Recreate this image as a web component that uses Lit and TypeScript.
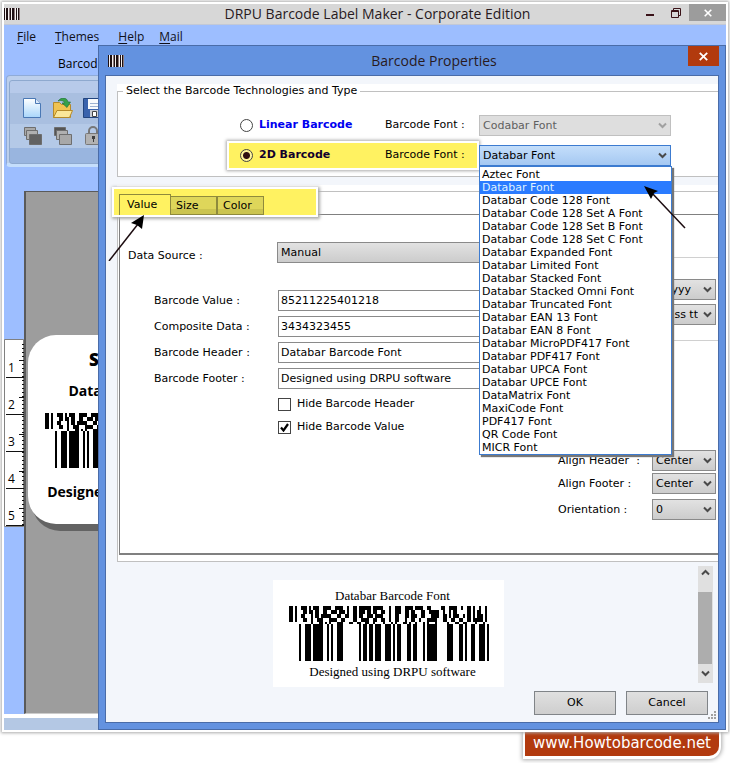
import { LitElement, html, svg, css, nothing } from "lit";
import { customElement, property, state } from "lit/decorators.js";
import { classMap } from "lit/directives/class-map.js";

const FONTS = [
  "Aztec Font", "Databar Font", "Databar Code 128 Font", "Databar Code 128 Set A Font",
  "Databar Code 128 Set B Font", "Databar Code 128 Set C Font", "Databar Expanded Font",
  "Databar Limited Font", "Databar Stacked Font", "Databar Stacked Omni Font",
  "Databar Truncated Font", "Databar EAN 13 Font", "Databar EAN 8 Font",
  "Databar MicroPDF417 Font", "Databar PDF417 Font", "Databar UPCA Font",
  "Databar UPCE Font", "DataMatrix Font", "MaxiCode Font", "PDF417 Font",
  "QR Code Font", "MICR Font",
];

/** Composite part of the symbol: four rows of modules, then a separator row. */
const COMPOSITE = [
  "110100111010111001111001111001001101111110111110001001110011110111100110000011001111001001101001001",
  "110100011011011001100111011101001101110110110011001001110011011000110011111001001011000001101011001",
  "110100110001011011111000110011001101100111011110001001100011011100110001111001101011100101101011101",
  "110100011001001110001111001100001100111100110011001001100010011001000111110001100110011001101111101",
];
const SEPARATOR =
  "0000000000010001101010001110001100110011001000010001010001101001000101000100000100011001100001000100";

/** Linear part: [first module, width]. */
const BARS = [
  [5, 1], [8, 3], [12, 5], [19, 1], [21, 1], [24, 3], [35, 1], [37, 2], [40, 2], [43, 3],
  [48, 3], [52, 1], [54, 2], [59, 2], [62, 2], [67, 1], [69, 5], [79, 3], [85, 2], [88, 1],
  [91, 2], [95, 3], [99, 1],
];

const runs = (row: string, y: number, h: number) =>
  [...row.matchAll(/1+/g)].map((m) => `M${m.index! * 2} ${y}h${m[0].length * 2}v${h}h-${m[0].length * 2}z`).join("");

@customElement("composite-barcode")
class CompositeBarcode extends LitElement {
  static styles = css`
    :host { display: block; width: 200px; height: 55px; }
    svg { display: block; }
  `;
  render() {
    const d =
      COMPOSITE.map((r, i) => runs(r, i * 4, 4)).join("") +
      runs(SEPARATOR, 16, 2) +
      BARS.map(([x, w]) => `M${x * 2} 18h${w * 2}v37h-${w * 2}z`).join("");
    return html`<svg width="200" height="55" shape-rendering="crispEdges" role="img" aria-label="Barcode"><path d=${d} /></svg>`;
  }
}

@customElement("drop-down")
class DropDown extends LitElement {
  @property() label = "";
  @property({ type: Array }) options: string[] = [];
  @property({ type: Number }) selected = 0;
  @property({ type: Boolean }) disabled = false;
  @property({ type: Boolean }) active = false;
  @property({ type: Boolean }) end = false;

  static styles = css`
    :host { display: grid; height: 21px; }
    select, svg { grid-area: 1 / 1; }
    select {
      appearance: none; width: 100%; height: 21px; margin: 0; padding: 0 17px 0 3px;
      border: 1px solid #8a8a8a; border-radius: 0; outline: none;
      background: linear-gradient(#e2e2e2, #cccccc);
      font: 11px "DejaVu Sans", sans-serif; color: #000;
    }
    select.active { border-color: #3c7bd0; background: linear-gradient(#c4defa, #a5c8f2); }
    select.end { text-align-last: right; }
    select:disabled { border-color: #c0c0c0; background: #dedede; color: #606060; opacity: 1; }
    svg { justify-self: end; align-self: center; margin-right: 4px; pointer-events: none; }
    path { fill: none; stroke: #4a4a4a; stroke-width: 2; }
    path.off { stroke: #a0a0a0; }
  `;
  render() {
    return html`
      <select aria-label=${this.label} ?disabled=${this.disabled}
        class=${classMap({ active: this.active, end: this.end })}>
        ${this.options.map((o, i) => html`<option ?selected=${i === this.selected}>${o}</option>`)}
      </select>
      <svg width="9" height="7"><path class=${this.disabled ? "off" : ""} d="M1 1.5 4.5 5 8 1.5" /></svg>
    `;
  }
}

const stripes = html`<svg class="app-icon" width="16" height="12" shape-rendering="crispEdges" aria-hidden="true">
  <path fill="#f4f0f0" d="M0 0h16v12H0z" />
  <path fill="#1d0f12" d="M0 0h1v12H0zM2 0h2v12H2zM6 0h1v12H6zM8 0h2v12H8zM12 0h1v12h-1zM14 0h1v12h-1z" />
  <path fill="#8b7a7c" d="M5 0h1v12H5zM10 0h1v12h-1zM15 0h1v12h-1z" /></svg>`;

const stack = (front: boolean) => svg`
  <g stroke="#6e6e6e">
    <path fill=${front ? "#a9a9a9" : "#555"} d="M1.500 1.500h11v8h-11z" />
    <path fill="#b0b0b0" d="M3.500 4.500h11v9h-11z" />
    <path fill=${front ? "#626262" : "#a8a8a8"} d="M6.500 8.500h12v10h-12z" />
  </g>`;

const TOOLS = [
  { name: "New", art: svg`<defs><linearGradient id="np" x2="0" y2="1"><stop stop-color="#fff"/><stop offset="1" stop-color="#a9d6fb"/></linearGradient></defs>
      <path fill="url(#np)" stroke="#4a78b5" d="M.5.500h12l5 5v14H.500z"/><path fill="#dceafa" stroke="#4a78b5" d="M12.500.5v5h5"/>` },
  { name: "Open", art: svg`<path fill="#f0c352" stroke="#b58a2a" d="M.500 19.500v-15h6l2 2h9v13z"/><path fill="#fbe79a" stroke="#b58a2a" d="M.500 19.500 4 12.500h15.500l-3 7z"/>
      <path fill="#35a04a" stroke="#1c6c33" stroke-width=".6" d="M5 3C8-1 14-1 15 4h2.500L14 9.500l-5-4.500h2.500C11 2.500 8 2 5 3z"/>` },
  { name: "Save", art: svg`<path fill="#3a63ad" stroke="#22457f" d="M.5.500h19v19H.500z"/><path fill="#f8fafc" d="M5 1h14v10H5z"/><path stroke="#9db2d2" d="M7 5.500h10M7 8.500h10"/><path fill="#c8ccd4" d="M7 12h10v7H7z"/><path fill="#fff" stroke="#444" d="M9.500 13.500h4v5h-4z"/>` },
  { name: "Send to back", art: stack(true) },
  { name: "Bring to front", art: stack(false) },
  { name: "Lock", art: svg`<path fill="none" stroke="#777" stroke-width="2" d="M6 8V5a4 4 0 0 1 8 0v3"/><rect x="2.500" y="7.500" width="17" height="11" rx="1" fill="#b2b2b2" stroke="#787878"/><path fill="#3f3f3f" d="M9 10h3v3h-1v3h-1v-3H9z"/>` },
];

@customElement("app-root")
class AppRoot extends LitElement {
  @state() private highlighted = 1;

  static styles = css`
    :host {
      display: flex; flex-direction: column; box-sizing: border-box; min-height: 100vh;
      padding: 2px 2px 0; background: #fff; overflow: hidden;
      font: 11px/14px "DejaVu Sans", sans-serif; color: #000;
    }
    * { box-sizing: border-box; }
    button { margin: 0; padding: 0; font: inherit; color: inherit; }
    ul { margin: 0; padding: 0; list-style: none; }
    svg { display: block; flex: none; }
    .title { font: 14px/20px "Open Sans", sans-serif; color: #281a1e; margin: 0; text-align: center; flex: 1; white-space: nowrap; }

    /* main window */
    .window {
      position: relative; flex: 1; display: flex; flex-direction: column;
      border: 2px solid #fff; box-shadow: 0 0 3px 1px #aaa; background: #9dbeff;
    }
    .bar { display: flex; height: 21px; background: #d7d7d7; border-bottom: 1px solid #c2c8d6; }
    .bar .app-icon { margin-top: 4px; }
    .bar .title { padding-left: 98px; }
    .controls { display: flex; }
    .controls button { display: grid; place-items: center; width: 26px; height: 17px; border: 0; background: none; }
    .controls .close { width: 37px; background: #9c9c9c; }
    .menu { display: flex; gap: 19px; padding: 2px 13px; height: 28px; font: 12px/20px "Open Sans", sans-serif; }
    .menu a { color: #101018; text-decoration: none; }
    .menu a:last-child { margin-left: -4px; }
    .menu u { text-underline-offset: 2px; }
    .ribbon-tab { padding-left: 54px; font: 12px/22px "Open Sans", sans-serif; height: 22px; }
    .ribbon {
      margin: 0 2px; height: 92px; padding: 4px 2px; border: 1px solid #8fabd8; border-radius: 4px 0 0 4px;
      border-bottom: 4px solid #c5defc; background: #bccfec; 
    }
    .tools {
      height: 84px; padding: 17px 0 0 13px; border: 1px solid #8ea9cf; border-radius: 3px;
      display: grid; grid-template-columns: repeat(3, 20px); grid-auto-rows: 20px; gap: 8px 10px;
      background: linear-gradient(#b7caea 12px, #a9bfe0 12px, #a9bfe0 43px, #b4c9e7 43px, #b4c9e7 67px, #99b5df 67px);
    }
    .tools button { border: 0; background: none; }
    .desk { flex: 1; display: flex; margin-top: 24px; border-bottom: 4px solid #fff; }
    .ruler { width: 20px; padding-top: 148px; }
    .ruler text { font: 12px "Open Sans", sans-serif; }
    .canvas { flex: 1; padding: 143px 2px; background: #9d9d9d; border: 1px solid #5a5a5a; border-left-width: 2px; border-bottom-color: #ccc; }
    .label {
      width: 234px; height: 189px; padding: 13px 0 0; border-radius: 28px; background: #fff; box-shadow: 4px 7px #636363;
      display: flex; flex-direction: column; align-items: center; font: bold 14px/22px "Open Sans", sans-serif; white-space: nowrap;
    }
    .label b { font-size: 17px; line-height: 24px; padding-left: 4px; }
    .label p { margin: 8px 0 11px; }
    .label p:last-child { margin: 13px 0 0; padding-left: 18px; }
    .status { height: 12px; background: #b4c8e4; }

    /* dialog */
    .dialog {
      position: absolute; left: 94px; right: 0; top: 41px; bottom: 0; display: flex; flex-direction: column;
      padding: 0 6px 6px; border: 1px solid #4a6ca8; background: #6392e0;
    }
    .dialog header { display: flex; height: 29px; }
    .dialog header .app-icon { margin: 9px 0 0 3px; }
    .dialog header .title { line-height: 30px; padding-left: 56px; }
    .dialog .close { display: grid; place-items: center; width: 31px; height: 20px; border: 0; background: #b23a0e; }
    .body { flex: 1; display: flex; flex-direction: column; padding: 8px 0 0 11px; border: 1px solid #4a6ca8; background: #f3f6fb; min-width: 0; }

    .group { background: #fff; margin-bottom: 8px; }
    fieldset { min-width: 0; margin: 0; padding: 12px 0 6px 109px; border: solid #c0c0c0; border-width: 1px 0 1px 1px; }
    legend { margin-left: -104px; padding: 0 3px; font-size: 11px; line-height: 14px; }
    .tech { display: flex; align-items: center; height: 30px; }
    .pick { display: flex; align-items: center; width: 252px; height: 29px; padding-left: 11px; border: 2px solid transparent; white-space: nowrap; }
    .pick.on { border-color: #fff; background: #fff261; box-shadow: 0 0 3px 1px #aaa; }
    .pick label { flex: none; width: 132px; padding-left: 6px; font-weight: bold; color: #0000f0; }
    .pick.on label { color: #12002c; }
    .field { position: relative; width: 192px; }
    input[type="radio"], input[type="checkbox"] {
      appearance: none; width: 13px; height: 13px; margin: 0; flex: none; border: 1px solid #444; background: #fff;
      display: grid; place-items: center;
    }
    input[type="radio"] { border-radius: 50%; }
    input[type="radio"]:checked { background: radial-gradient(circle, #301010 0 3px, #fff59a 4px); }
    .options {
      position: absolute; z-index: 5; left: 0; top: 21px; width: 193px; padding: 1px 0 0; background: #fff;
      border: 1px solid #3c7bd0; box-shadow: 2px 2px 1px #777;
    }
    .options li { padding-left: 2px; line-height: 13px; white-space: nowrap; cursor: default; }
    .options li.hot { background: #2a7bff; color: #dff1ff; }

    .pages { padding-top: 6px; margin-bottom: 4px; }
    .frame { border: solid #c0c0c0; border-width: 1px 0 1px 1px; padding: 0 0 6px 1px; }
    .tabs {
      position: relative; z-index: 1; display: flex; align-items: flex-start; width: 206px; height: 30px;
      margin: -5px 0 -3px -7px; padding: 5px 5px 0; border: 2px solid #fff; background: #fff261; box-shadow: 1px 1px 3px 1px #aaa;
    }
    .tabs button {
      width: 47px; height: 19px; margin-top: 2px; border: 1px solid #8f8a3c; background: linear-gradient(#ded65a 12px, #cbc450 12px);
      text-align: left; padding-left: 5px;
    }
    .tabs .on { width: 52px; height: 21px; margin: 0 -1px 0 0; padding-left: 7px; background: #fff261; border-bottom: 0; }
    .page { display: flex; justify-content: space-between; height: 341px; border: solid #808080; border-width: 1px 0 2px 1px; }
    .source { display: grid; grid-template-columns: 149px 222px; align-items: end; padding: 27px 0 27px 8px; }
    .values { display: grid; grid-template-columns: 124px 222px; grid-auto-rows: 21px; row-gap: 5px; align-items: center; padding-left: 34px; }
    .values input { width: 100%; height: 21px; padding: 0 2px; margin: 0; border: 1px solid #8a8a8a; border-radius: 0; font: inherit; background: #fff; }
    .checks { display: grid; gap: 9px; padding: 8px 0 0 158px; }
    .checks label { display: flex; align-items: center; gap: 6px; height: 14px; }
    .tick { display: grid; }
    .tick > * { grid-area: 1 / 1; }
    .tick svg { pointer-events: none; margin: 2px; position: relative; }

    .side { width: 160px; padding-top: 42px; display: flex; flex-direction: column; }
    .formats { display: grid; gap: 4px; justify-items: end; padding: 21px 2px 15px 0; border: solid #d0d0d0; border-width: 1px 0; }
    .formats drop-down { width: 114px; }
    .aligns { display: grid; grid-template-columns: 94px 64px; row-gap: 2px; align-items: center; padding-top: 109px; white-space: pre; }
    .aligns .last { margin-top: 3px; }

    .preview { flex: 1; display: flex; justify-content: space-between; padding-right: 5px; }
    .preview::before { content: ""; width: 14px; }
    .card {
      width: 231px; height: 107px; margin: 14px 0 0 -52px; padding: 7px 0; background: #fff; display: flex; flex-direction: column;
      align-items: center; justify-content: space-between; font: 13px/17px "Liberation Serif", serif;
    }
    .card span { white-space: nowrap; padding-left: 8px; }
    .scroll { display: grid; grid-template-rows: 26px 72px 19px; width: 15px; height: 117px; background: #e0e0e0; }
    .scroll button { border: 0; background: none; display: grid; justify-items: center; align-content: center; }
    .scroll button:first-child { align-content: start; padding-top: 3px; }
    .thumb { background: #adadad; margin-right: 1px; }
    .scroll path { fill: none; stroke: #4a4a4a; stroke-width: 2; }
    .actions { display: flex; justify-content: flex-end; align-items: flex-start; height: 31px; }
    .actions button { width: 82px; height: 24px; margin-right: 10px; border: 1px solid #808488; background: linear-gradient(#e0e0e0, #cecece); }
    .actions button + button { margin-right: 0; }
    .grip { margin: 20px 2px 0 0; }

    .arrow { position: absolute; pointer-events: none; z-index: 6; }
    .arrow.tab-arrow { left: -11px; top: 20px; }
    .arrow.list-arrow { left: 164px; top: 40px; }

    .site {
      align-self: flex-end; margin: 0 9px 7px; padding: 0 8px; height: 24px; background: #b23a0e; color: #fff;
      font: 15px/23px "DejaVu Sans", sans-serif; text-decoration: none; border-radius: 0 0 10px 0; box-shadow: 0 1px 0 2px #fff, 0 1px 4px 3px #aaa;
    }
  `;

  private cross(size: number) {
    return html`<svg width=${size} height=${size} viewBox="0 0 8 8" aria-hidden="true"><path stroke="#fff" stroke-width="1.6" d="M.7.7l6.600 6.600M7.300.7.7 7.300" /></svg>`;
  }

  private ruler() {
    const ticks: string[] = [];
    for (let y = 5; y < 186; y += 4) ticks.push(`M18 ${y}.500h2`);
    return html`<svg width="20" height="188" role="img" aria-label="Ruler">
      <path fill="#fff" stroke="#808080" d="M.5.500h19v187H.500z" />
      <path stroke="#111" d=${ticks.join("") + [0, 1, 2, 3, 4].map((i) => `M2 ${38 + i * 37}.500h18M15 ${21 + i * 37}.500h5`).join("")} />
      ${[0, 1, 2, 3, 4].map((i) => svg`<text x="4" y=${33 + i * 37}>${i + 1}</text>`)}
    </svg>`;
  }

  private technology(id: string, name: string, on: boolean) {
    return html`<div class="tech">
      <div class=${classMap({ pick: true, on })}>
        <input type="radio" name="technology" id=${id} .checked=${on} />
        <label for=${id}>${name}</label><span>Barcode Font :</span>
      </div>
      <div class="field">
        <drop-down label="${name} font" .options=${on ? FONTS : ["Codabar Font"]} .selected=${on ? 1 : 0} ?disabled=${!on} ?active=${on}></drop-down>
        ${on ? html`
          <ul class="options" role="listbox" aria-label="Barcode fonts">
            ${FONTS.map((f, i) => html`<li role="option" aria-selected=${i === this.highlighted}
              class=${i === this.highlighted ? "hot" : ""} @click=${() => (this.highlighted = i)}>${f}</li>`)}
          </ul>
          <svg class="arrow list-arrow" width="44" height="44" aria-hidden="true"><path stroke="#1c0c10" stroke-width="1.500" d="M8 7 42 43" /><path d="M1 1 15 6 11 8 8 14z" /></svg>` : nothing}
      </div>
    </div>`;
  }

  private entry(id: string, name: string, value: string) {
    return html`<label for=${id}>${name}</label><input id=${id} type="text" .value=${value} />`;
  }

  private check(name: string, on: boolean) {
    return html`<label><span class="tick"><input type="checkbox" .checked=${on} />
      ${on ? html`<svg width="9" height="9" aria-hidden="true"><path fill="none" stroke="#000" stroke-width="2.200" d="M1 4.500 3.500 7.500 8 1" /></svg>` : nothing}</span>${name}</label>`;
  }

  render() {
    return html`
      <main class="window">
        <div class="bar">
          ${stripes}
          <h1 class="title">DRPU Barcode Label Maker - Corporate Edition</h1>
          <div class="controls">
            <button aria-label="Minimize"><svg width="8" height="8"><path fill="#3a1218" d="M0 5h8v2H0z" /></svg></button>
            <button aria-label="Restore"><svg width="10" height="10"><path fill="none" stroke="#3a1218" d="M2.500 2V.5h7v7H8M.5 2.500h7v7h-7zM.5 3.500h7" /></svg></button>
            <button class="close" aria-label="Close">${this.cross(8)}</button>
          </div>
        </div>
        <nav class="menu">
          <a href="#file"><u>F</u>ile</a><a href="#themes"><u>T</u>hemes</a><a href="#help"><u>H</u>elp</a><a href="#mail"><u>M</u>ail</a>
        </nav>
        <div class="ribbon-tab">Barcode</div>
        <div class="ribbon"><div class="tools">
          ${TOOLS.map((t) => html`<button aria-label=${t.name}><svg width="20" height="20">${t.art}</svg></button>`)}
        </div></div>
        <div class="desk">
          <div class="ruler">${this.ruler()}</div>
          <div class="canvas"><div class="label">
            <b>Sample Label</b><p>Databar Barcode Font</p><composite-barcode></composite-barcode><p>Designed using DRPU software</p>
          </div></div>
        </div>
        <div class="status"></div>

        <section class="dialog" role="dialog" aria-labelledby="dialog-title">
          <header>${stripes}<h2 class="title" id="dialog-title">Barcode Properties</h2>
            <button class="close" aria-label="Close dialog">${this.cross(9)}</button></header>
          <div class="body">
            <div class="group"><fieldset>
              <legend>Select the Barcode Technologies and Type</legend>
              ${this.technology("linear", "Linear Barcode", false)}
              ${this.technology("matrix", "2D Barcode", true)}
            </fieldset></div>

            <div class="group pages"><div class="frame">
              <div class="tabs" role="tablist">
                <button class="on" role="tab" aria-selected="true">Value</button><button role="tab">Size</button><button role="tab">Color</button>
                <svg class="arrow tab-arrow" width="44" height="52" aria-hidden="true"><path stroke="#1c0c10" stroke-width="1.500" d="M6 52 35 15" /><path d="M41 6 39 20 34 16 28 14z" /></svg>
              </div>
              <div class="page">
                <div class="form">
                  <div class="source"><span>Data Source :</span><drop-down label="Data Source" .options=${["Manual"]}></drop-down></div>
                  <div class="values">
                    ${this.entry("value", "Barcode Value :", "85211225401218")}
                    ${this.entry("composite", "Composite Data :", "3434323455")}
                    ${this.entry("head", "Barcode Header :", "Databar Barcode Font")}
                    ${this.entry("foot", "Barcode Footer :", "Designed using DRPU software")}
                  </div>
                  <div class="checks">${this.check("Hide Barcode Header", false)}${this.check("Hide Barcode Value", true)}</div>
                </div>
                <div class="side">
                  <div class="formats">
                    <drop-down end label="Date format" .options=${["dd/MMM/yyyy\u00a0\u00a0"]}></drop-down>
                    <drop-down end label="Time format" .options=${["hh:mm:ss tt"]}></drop-down>
                  </div>
                  <div class="aligns">
                    <span>Align Header  :</span><drop-down label="Align Header" .options=${["Center"]}></drop-down>
                    <span>Align Footer :</span><drop-down label="Align Footer" .options=${["Center"]}></drop-down>
                    <span class="last">Orientation :</span><drop-down class="last" label="Orientation" .options=${["0"]}></drop-down>
                  </div>
                </div>
              </div>
            </div></div>

            <div class="preview">
              <div class="card"><span>Databar Barcode Font</span><composite-barcode></composite-barcode><span>Designed using DRPU software</span></div>
              <div class="scroll">
                <button aria-label="Scroll up"><svg width="9" height="7"><path d="M1 5.500 4.500 2 8 5.500" /></svg></button>
                <div class="thumb"></div>
                <button aria-label="Scroll down"><svg width="9" height="7"><path d="M1 1.500 4.500 5 8 1.500" /></svg></button>
              </div>
            </div>
            <div class="actions">
              <button>OK</button><button>Cancel</button>
              <svg class="grip" width="8" height="8" aria-hidden="true"><path fill="#a0a0a0" d="M6 0h2v2H6zM3 3h2v2H3zM6 3h2v2H6zM0 6h2v2H0zM3 6h2v2H3zM6 6h2v2H6z" /></svg>
            </div>
          </div>
        </section>
      </main>
      <a class="site" href="#home">www.Howtobarcode.net</a>
    `;
  }
}
